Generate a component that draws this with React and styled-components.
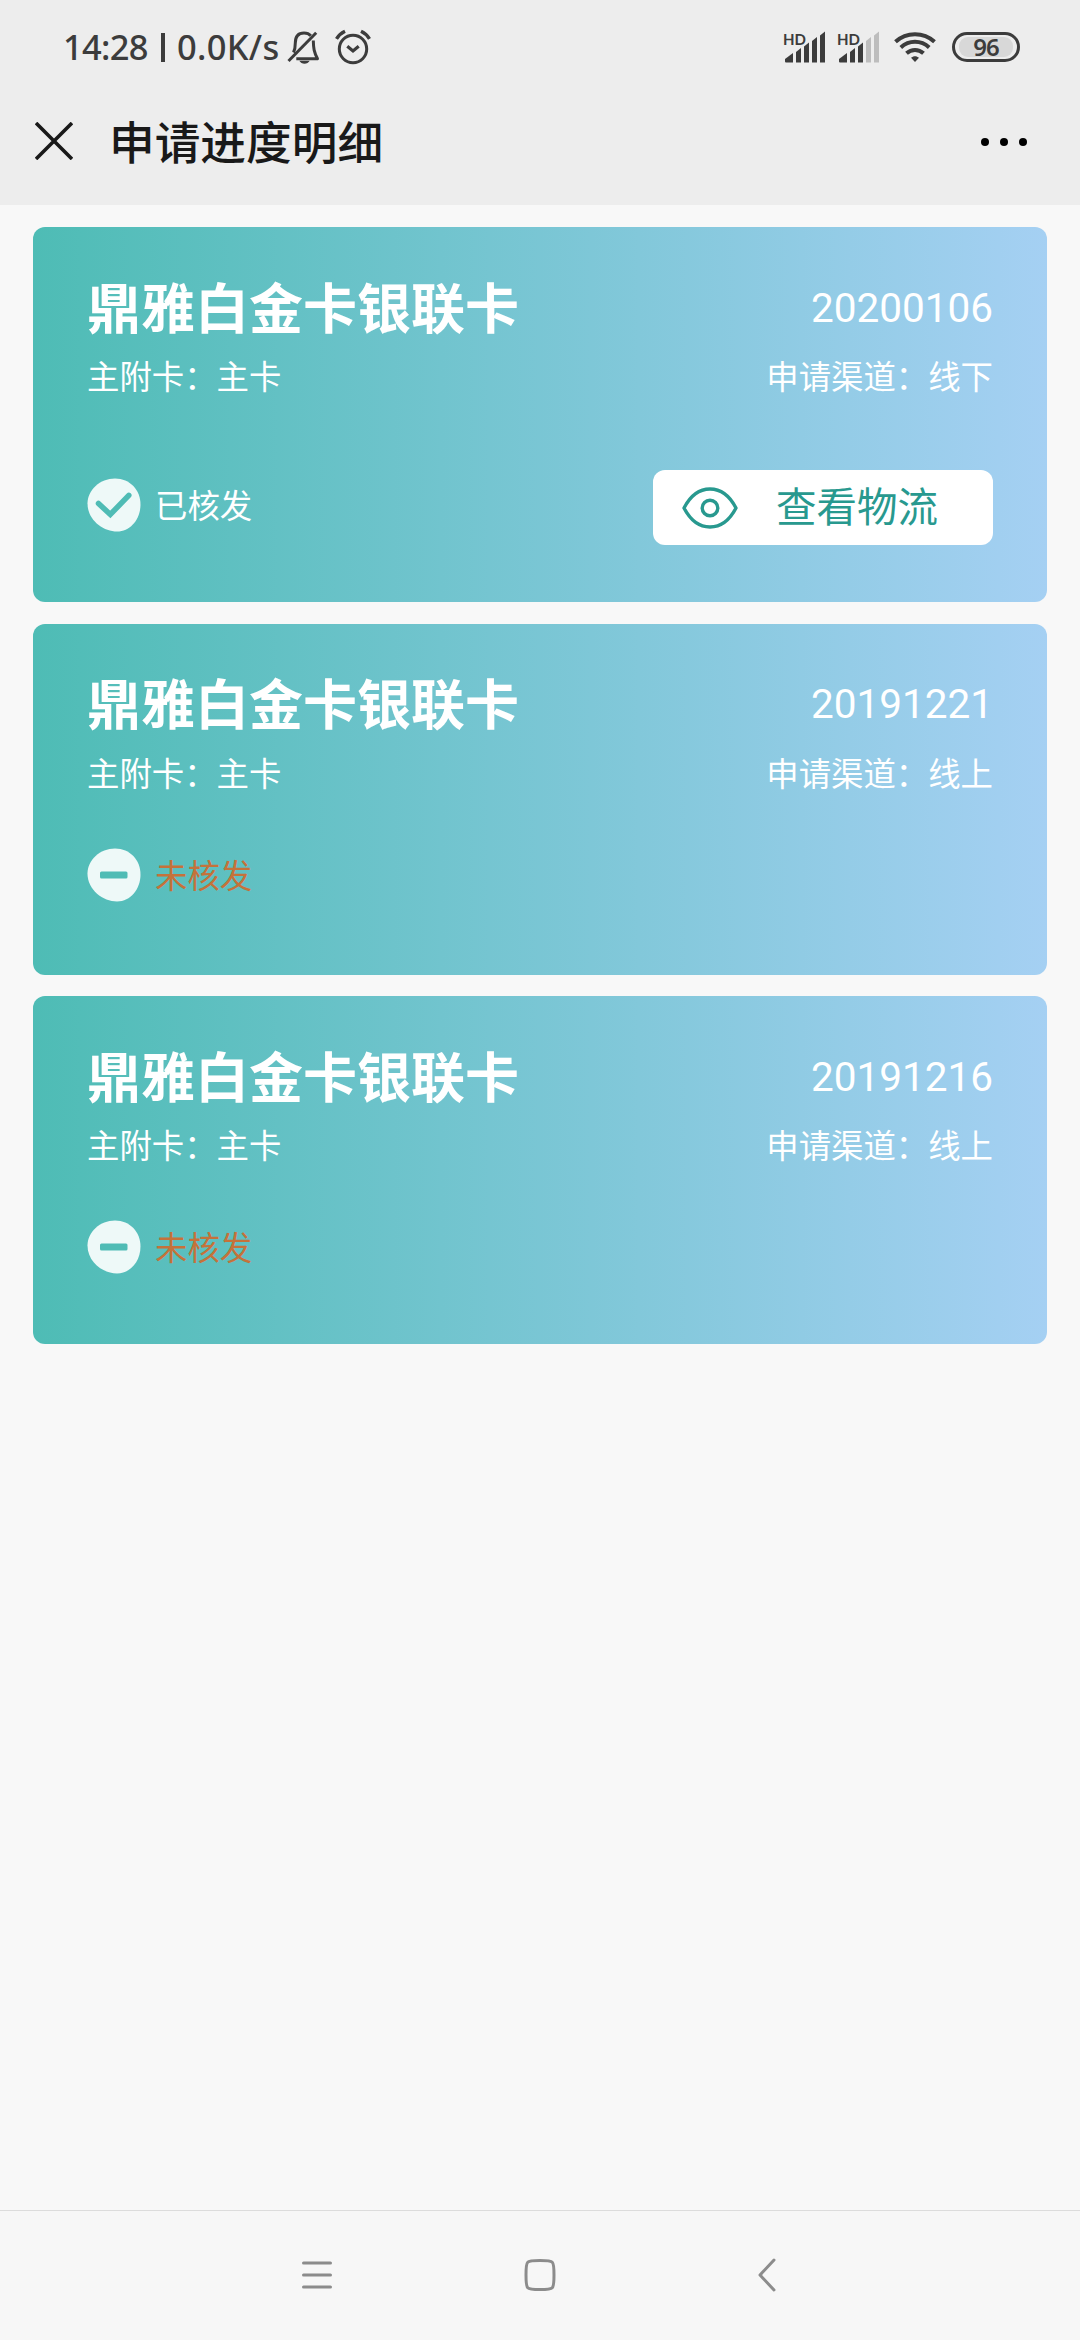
import React from 'react';
import styled, { createGlobalStyle } from 'styled-components';

const applications = [
    { name: '鼎雅白金卡银联卡', date: '20200106', type: '主卡', channel: '线下', approved: true, height: 375 },
    { name: '鼎雅白金卡银联卡', date: '20191221', type: '主卡', channel: '线上', approved: false, height: 351 },
    { name: '鼎雅白金卡银联卡', date: '20191216', type: '主卡', channel: '线上', approved: false, height: 348 },
];

const MutedBell = () => (
    <svg width="34" height="36" viewBox="0 0 34 36" fill="none" stroke="#3c3c3c" strokeWidth="3">
        <path d="M6.500 23.500c1.300-2.500 1.800-5 1.800-9.500C8.300 7.500 11.500 4 17 4c3 0 5.300 1 6.800 2.800" />
        <path d="M26.300 11.500c.2 8 .7 11.500 4.200 18.200H9.300" strokeLinejoin="round" />
        <path d="M1.500 32L29.200 3.800" />
        <path d="M12.300 31.800h10.400c-1.200 2-3 3-5.200 3s-4-1-5.200-3z" fill="#3c3c3c" stroke="none" />
    </svg>
);

const Alarm = () => (
    <svg width="36" height="36" viewBox="0 0 36 36" fill="none" stroke="#3c3c3c" strokeWidth="3">
        <circle cx="18" cy="20" r="13.700" />
        <path d="M12.300 17.300l5.700 4.700 5.700-4.700" strokeWidth="3.200" />
        <path d="M1.500 9.800C3.500 6.500 6.500 4 10 2.300M34.500 9.800C32.500 6.500 29.500 4 26 2.300" strokeWidth="3.400" />
    </svg>
);

const Signal = ({ level }) => {
    const bars = [
        'M3 29l8-6v9.500H4q-1 0-1-1z',
        'M14 22l5-4v14.500h-5z',
        'M22 16.500l5-4v20h-5z',
        'M30 11l5-4v25.500h-5z',
        'M38 5.500l5-4v31h-5z',
    ];
    return (
        <SignalBox>
            <span>HD</span>
            <svg width="44" height="34" viewBox="0 0 44 34">
                {bars.map((d, i) => (
                    <path key={d} d={d} fill={i < level ? '#3c3c3c' : '#bdbdbd'} />
                ))}
            </svg>
        </SignalBox>
    );
};

const Wifi = () => (
    <svg width="42" height="32" viewBox="0 0 42 32" fill="none" stroke="#3c3c3c" strokeWidth="4">
        <path d="M1.500 10.800C12.500.7 29.500.7 40.500 10.800" />
        <path d="M6.800 16.400C15 9 27 9 35.200 16.400" />
        <path d="M12.500 22.300c5-4.500 12-4.500 17 0" />
        <path d="M17 26.800c2.300-2.200 5.700-2.200 8 0L21 31z" fill="#3c3c3c" stroke="none" />
    </svg>
);

const StatusIcon = ({ approved }) => (
    <svg width="54" height="54" viewBox="0 0 54 54" fill="none">
        <path
            d="M28 .5C43 .5 53.500 12 53.500 26.500S43.500 53.500 30 53.500C16 53.500.5 42 .5 25.500.5 12 13 .5 28 .5z"
            fill="#eef9f8"
        />
        {approved ? (
            <path d="M11.500 25.500L23.300 36.500 41.800 17.300" stroke="#4fbcb5" strokeWidth="5.500" strokeLinecap="round" />
        ) : (
            <rect x="13" y="23.500" width="27.500" height="7" rx="1.500" fill="#4fbcb5" />
        )}
    </svg>
);

const Eye = () => (
    <svg width="56" height="42" viewBox="0 0 56 42" fill="none" stroke="#28998f" strokeWidth="3.400">
        <path d="M2 21C8 9.500 17 2 28 2s20 7.500 26 19c-6 11.500-15 19-26 19S8 32.500 2 21z" strokeLinejoin="round" />
        <circle cx="28" cy="21" r="7.800" />
    </svg>
);

const ApplicationCard = ({ item }) => (
    <Card $height={item.height}>
        <Line $height={56}>
            <CardName>{item.name}</CardName>
            <CardDate>{item.date}</CardDate>
        </Line>
        <Line $height={44} $top={19}>
            <Small>主附卡：{item.type}</Small>
            <Small>申请渠道：{item.channel}</Small>
        </Line>
        <Line $height={item.approved ? 75 : 54} $top={item.approved ? 72 : 53}>
            <Status $approved={item.approved}>
                <StatusIcon approved={item.approved} />
                <span>{item.approved ? '已核发' : '未核发'}</span>
            </Status>
            {item.approved && (
                <TrackButton>
                    <Eye />
                    <span>查看物流</span>
                </TrackButton>
            )}
        </Line>
    </Card>
);

const App = () => {
    return (
        <Screen>
            <GlobalStyle />
            <Header>
                <StatusBar>
                    <Clock>14:28</Clock>
                    <Divider />
                    <Speed>0.0K/s</Speed>
                    <MutedBell />
                    <Alarm />
                    <Indicators>
                        <Signal level={5} />
                        <Signal level={3} />
                        <Wifi />
                        <Battery><span>96</span></Battery>
                    </Indicators>
                </StatusBar>
                <TitleBar>
                    <svg width="38" height="38" viewBox="0 0 38 38" stroke="#191919" strokeWidth="3.600">
                        <path d="M1 1l36 36M37 1L1 37" />
                    </svg>
                    <h1>申请进度明细</h1>
                    <More><i /><i /><i /></More>
                </TitleBar>
            </Header>
            <List>
                {applications.map((item) => (
                    <ApplicationCard key={item.date} item={item} />
                ))}
            </List>
            <NavBar>
                <svg width="30" height="34" viewBox="0 0 30 34" stroke="#8c8c8c" strokeWidth="3" strokeLinecap="round">
                    <path d="M1.500 5h27M1.500 17h27M1.500 29h27" />
                </svg>
                <svg width="34" height="34" viewBox="0 0 34 34" fill="none" stroke="#8c8c8c" strokeWidth="3">
                    <path d="M17 2.500c9 0 11 .4 12.300 1.800C30.600 5.600 31 8 31 17s-.4 11.400-1.700 12.700C28 31.100 26 31.500 17 31.500s-11-.4-12.300-1.800C3.400 28.400 3 26 3 17s.4-11.400 1.700-12.700C6 2.900 8 2.500 17 2.500z" />
                </svg>
                <svg width="30" height="34" viewBox="0 0 30 34" fill="none" stroke="#8c8c8c" strokeWidth="3" strokeLinecap="round">
                    <path d="M26 2L12 17l14 15" strokeLinejoin="round" />
                </svg>
            </NavBar>
        </Screen>
    )
}

const GlobalStyle = createGlobalStyle`
    * {
        box-sizing: border-box;
    }

    body {
        margin: 0;
        background: #f8f8f8;
        font-family: Roboto, "Noto Sans CJK SC", sans-serif;
    }

    svg {
        display: block;
        flex: none;
    }
`

const Screen = styled.div`
    display: flex;
    flex-direction: column;
    width: 1080px;
    height: 2340px;
    background: #f8f8f8;
`

const Header = styled.header`
    height: 205px;
    background: #ededed;
`

const StatusBar = styled.div`
    display: flex;
    align-items: center;
    height: 94px;
    padding: 0 60px 0 63px;
    color: #3c3c3c;
    font-family: "Noto Sans", sans-serif;

    svg + svg {
        margin-left: 14px;
    }
`

const Clock = styled.span`
    width: 98px;
    padding-bottom: 1px;
    font-size: 34.5px;
    font-weight: 550;
    letter-spacing: -0.7px;
`

const Divider = styled.i`
    width: 4px;
    height: 29px;
    background: #3c3c3c;
`

const Speed = styled.span`
    width: 122px;
    padding: 0 0 1px 12px;
    font-size: 34.5px;
    font-weight: 500;
    letter-spacing: 0.3px;
`

const Indicators = styled.div`
    display: flex;
    align-items: center;
    gap: 10px;
    margin-left: auto;

    > svg {
        margin-left: 4px;
    }
`

const SignalBox = styled.div`
    display: grid;

    > * {
        grid-area: 1 / 1;
    }

    span {
        padding-left: 1px;
        font-family: Lato, sans-serif;
        font-size: 15px;
        font-weight: 700;
        line-height: 18px;
    }
`

const Battery = styled.div`
    display: flex;
    width: 68px;
    height: 30px;
    margin-left: 6px;
    padding: 2px 4px;
    border: 3px solid #3c3c3c;
    border-radius: 15px;

    span {
        flex: 1;
        border-radius: 9px;
        background: #d8d8d8;
        font-size: 24px;
        font-weight: 600;
        line-height: 20px;
        letter-spacing: -1px;
        text-align: center;
    }
`

const TitleBar = styled.div`
    display: flex;
    align-items: center;
    height: 94px;
    padding: 0 53px 0 35px;
    color: #191919;

    h1 {
        margin: 0 0 0 36px;
        padding-top: 7px;
        font-size: 45.700px;
        font-weight: 500;
        line-height: 60px;
    }
`

const More = styled.div`
    display: flex;
    gap: 11px;
    margin-left: auto;
    padding-top: 1px;

    i {
        width: 8px;
        height: 8px;
        border-radius: 50%;
        background: #000;
    }
`

const List = styled.main`
    display: flex;
    flex: 1;
    flex-direction: column;
    gap: 21.500px;
    padding: 22px 33px;
`

const Card = styled.section`
    height: ${({ $height }) => $height}px;
    padding: 52px 54px 0;
    border-radius: 12px;
    background: linear-gradient(90deg, #4ebcb5, #a5d0f3);
    color: #fff;
`

const Line = styled.div`
    display: flex;
    align-items: center;
    justify-content: space-between;
    height: ${({ $height }) => $height}px;
    margin-top: ${({ $top }) => $top || 0}px;
`

const CardName = styled.h2`
    margin: 0;
    padding-top: 7px;
    font-size: 54px;
    font-weight: 700;
    line-height: 56px;
`

const CardDate = styled.span`
    padding-top: 1px;
    font-size: 40.500px;
`

const Small = styled.span`
    padding-top: 4px;
    font-size: 32.400px;
    line-height: 44px;
`

const Status = styled.div`
    display: flex;
    align-items: center;
    gap: 14px;
    padding-bottom: ${({ $approved }) => ($approved ? 5 : 0)}px;
    color: ${({ $approved }) => ($approved ? '#fff' : '#c5723a')};
    font-size: 32.400px;
    line-height: 44px;

    span {
        padding-top: 4px;
    }
`

const TrackButton = styled.div`
    display: flex;
    align-items: center;
    width: 340px;
    height: 75px;
    padding-left: 29px;
    border-radius: 12px;
    background: #fff;
    color: #28998f;
    font-size: 40.500px;
    line-height: 60px;

    span {
        margin-left: 38px;
    }
`

const NavBar = styled.nav`
    display: flex;
    align-items: center;
    justify-content: space-between;
    height: 130px;
    padding: 0 302px 2px 302px;
    border-top: 1px solid #dcdcdc;
    background: #f7f7f7;
`

export default App;
